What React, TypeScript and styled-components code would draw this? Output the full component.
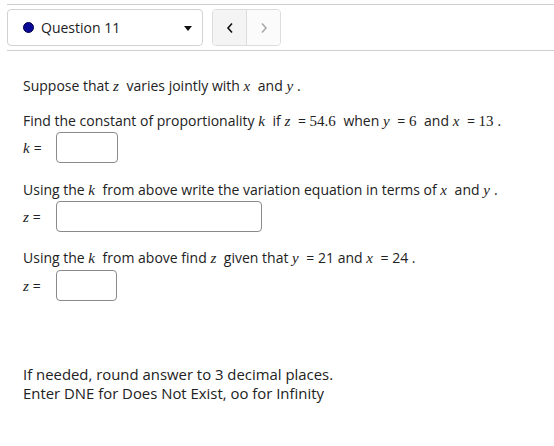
import styled, { createGlobalStyle } from 'styled-components'

const GlobalStyle = createGlobalStyle`
  body {
    margin: 0;
    background: #fff;
    font-family: 'Open Sans', 'Noto Sans', sans-serif;
    font-size: 14px;
    color: #222;
  }
`;

const Page = styled.div`
  padding-top: 4px;
`;

const Toolbar = styled.div`
  margin-left: 7px;
  border-top: 1px solid #cfcfcf;
  border-bottom: 1px solid #cfcfcf;
  padding: 4px 0;
  display: flex;
  align-items: center;
  gap: 9px;
`;

const Select = styled.div`
  width: 196px;
  height: 37px;
  box-sizing: border-box;
  border: 1px solid #d2d2d2;
  border-radius: 4px;
  display: flex;
  align-items: center;
  padding: 0 10px 0 15px;
  gap: 7px;
`;

const Dot = styled.span`
  width: 11px;
  height: 11px;
  border-radius: 50%;
  background: #0a0a96;
  border: 1px solid #000050;
  box-sizing: border-box;
`;

const SelectLabel = styled.span`
  flex: 1;
  color: #222;
`;

const Caret = styled.span`
  width: 0;
  height: 0;
  border-left: 4px solid transparent;
  border-right: 4px solid transparent;
  border-top: 5px solid #111;
  margin-top: 2px;
`;

const NavGroup = styled.div`
  display: flex;
  height: 37px;
  box-sizing: border-box;
  border: 1px solid #dcdcdc;
  border-radius: 4px;
  overflow: hidden;
`;

const NavButton = styled.div<{ $active?: boolean }>`
  width: 33px;
  display: flex;
  align-items: center;
  justify-content: center;
  background: ${p => (p.$active ? '#f4f4f4' : '#fbfbfb')};
  color: ${p => (p.$active ? '#111' : '#aaa')};
  & + & {
    border-left: 1px solid #dcdcdc;
  }
`;

const Content = styled.div`
  padding: 25px 0 0 23px;
`;

const Para = styled.p<{ $gap?: number }>`
  margin: ${p => p.$gap ?? 0}px 0 0 0;
  line-height: 20px;
  white-space: nowrap;
`;

const V = styled.i`
  font-family: 'Liberation Serif', 'Times New Roman', serif;
  font-size: 15px;
  margin-right: 4px;
`;

const Num = styled.span`
  font-family: 'Liberation Serif', 'Times New Roman', serif;
  font-size: 15px;
  margin-right: 4px;
`;

const AnswerRow = styled.div<{ $gap?: number }>`
  display: flex;
  align-items: center;
  margin-top: ${p => p.$gap ?? 1}px;
`;

const Label = styled.span`
  width: 33px;
`;

const Input = styled.div<{ $w: number }>`
  width: ${p => p.$w}px;
  height: 31px;
  box-sizing: border-box;
  border: 1px solid #8a8a8a;
  border-radius: 4px;
`;

const Note = styled.div`
  margin-top: 64px;
  line-height: 19px;
  font-size: 14.9px;
`;

const Chevron = ({ dir }: { dir: 'left' | 'right' }) => (
  <svg width="8" height="12" viewBox="0 0 8 12">
    <path
      d={dir === 'left' ? 'M6 1.5 L2 6 L6 10.5' : 'M2 1.5 L6 6 L2 10.5'}
      fill="none"
      stroke="currentColor"
      strokeWidth="1.6"
    />
  </svg>
);

function App() {
  return (
    <Page>
      <GlobalStyle />
      <Toolbar>
        <Select>
          <Dot />
          <SelectLabel>Question 11</SelectLabel>
          <Caret />
        </Select>
        <NavGroup>
          <NavButton $active><Chevron dir="left" /></NavButton>
          <NavButton><Chevron dir="right" /></NavButton>
        </NavGroup>
      </Toolbar>
      <Content>
        <Para>
          Suppose that <V>z</V> varies jointly with <V>x</V> and <V>y</V>.
        </Para>
        <Para $gap={15}>
          Find the constant of proportionality <V>k</V> if <V>z</V> ={' '}
          <Num>54.6</Num> when <V>y</V> = <Num>6</Num> and <V>x</V> = <Num>13</Num>.
        </Para>
        <AnswerRow>
          <Label><V>k</V>=</Label>
          <Input $w={62} />
        </AnswerRow>
        <Para $gap={17}>
          Using the <V>k</V> from above write the variation equation in terms of <V>x</V> and <V>y</V>.
        </Para>
        <AnswerRow>
          <Label><V>z</V>=</Label>
          <Input $w={206} />
        </AnswerRow>
        <Para $gap={16}>
          Using the <V>k</V> from above find <V>z</V> given that <V>y</V> = 21 and <V>x</V> = 24 .
        </Para>
        <AnswerRow $gap={2}>
          <Label><V>z</V>=</Label>
          <Input $w={61} />
        </AnswerRow>
        <Note>
          If needed, round answer to 3 decimal places.
          <br />
          Enter DNE for Does Not Exist, oo for Infinity
        </Note>
      </Content>
    </Page>
  )
}

export default App
